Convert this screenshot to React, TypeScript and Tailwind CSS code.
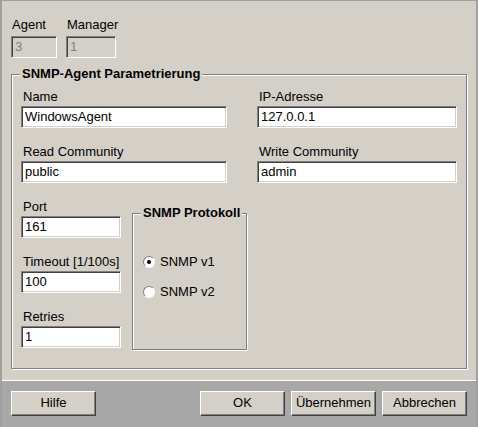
const font = { fontFamily: '"Liberation Sans", Arial, sans-serif' }

function Field({ value, disabled, w }: { value: string; disabled?: boolean; w: string }) {
  return (
    <div
      className={`${w} h-[22px] flex items-center pl-[3px] text-[13px] border border-t-[#808080] border-l-[#808080] border-b-white border-r-white shadow-[inset_1px_1px_0_#404040,inset_-1px_-1px_0_#d4d0c8] ${disabled ? 'bg-[#d4d0c8] text-[#808080]' : 'bg-white text-black'}`}
    >
      {value}
    </div>
  )
}

function Labeled({ label, value, w }: { label: string; value: string; w: string }) {
  return (
    <div className="flex flex-col">
      <div className="h-[19px] pl-[2px] text-[13px] leading-[15px] pt-[2px]">{label}</div>
      <Field value={value} w={w} />
    </div>
  )
}

function Button({ children, w = 'w-[85px]' }: { children: string; w?: string }) {
  return (
    <button className={`${w} h-[25px] bg-[#d4d0c8] text-[13px] text-black border border-t-white border-l-white border-b-[#404040] border-r-[#404040] shadow-[inset_-1px_-1px_0_#808080]`}>
      {children}
    </button>
  )
}

function Radio({ checked, label }: { checked?: boolean; label: string }) {
  return (
    <div className="flex items-center gap-[5px] h-[16px]">
      <div className="w-[12px] h-[12px] rounded-full bg-white border border-t-[#808080] border-l-[#808080] border-b-white border-r-white flex items-center justify-center">
        {checked && <div className="w-[4px] h-[4px] rounded-full bg-black" />}
      </div>
      <span className="text-[13px]">{label}</span>
    </div>
  )
}

function Group({ title, className, children }: { title: string; className: string; children: React.ReactNode }) {
  return (
    <div className={`relative border border-[#808080] shadow-[inset_1px_1px_0_white,1px_1px_0_white] ${className}`}>
      <div className="absolute -top-[9px] left-[8px] px-[2px] bg-[#d4d0c8] text-[13px] font-bold leading-[16px]">{title}</div>
      {children}
    </div>
  )
}

export default function App() {
  return (
    <div style={font} className="w-[478px] h-[427px] flex flex-col bg-[#a8a8a8] text-black overflow-hidden border-l-2 border-t border-r-2 border-[#a0a0a0]">
      <div className="flex-1 bg-[#d4d0c8] flex flex-col pl-[9px] pt-[12px] border-b border-white">
        {/* Agent / Manager */}
        <div className="flex gap-[9px]">
          <div className="flex flex-col">
            <div className="h-[23px] pl-[1px] text-[13px] pt-[2px]">Agent</div>
            <Field value="3" disabled w="w-[46px]" />
          </div>
          <div className="flex flex-col">
            <div className="h-[23px] pl-[1px] text-[13px] pt-[2px]">Manager</div>
            <Field value="1" disabled w="w-[50px]" />
          </div>
        </div>

        {/* SNMP-Agent Parametrierung */}
        <Group title="SNMP-Agent Parametrierung" className="mt-[16px] w-[456px] h-[295px] pl-[9px] pr-[9px] pt-[12px]">
          <div className="flex justify-between">
            <Labeled label="Name" value="WindowsAgent" w="w-[206px]" />
            <Labeled label="IP-Adresse" value="127.0.0.1" w="w-[200px]" />
          </div>
          <div className="flex justify-between mt-[14px]">
            <Labeled label="Read Community" value="public" w="w-[206px]" />
            <Labeled label="Write Community" value="admin" w="w-[200px]" />
          </div>
          <div className="flex items-start mt-[14px]">
            <div className="flex flex-col gap-[14px]">
              <Labeled label="Port" value="161" w="w-[100px]" />
              <Labeled label="Timeout [1/100s]" value="100" w="w-[100px]" />
              <Labeled label="Retries" value="1" w="w-[100px]" />
            </div>
            <Group title="SNMP Protokoll" className="ml-[11px] mt-[16px] w-[115px] h-[137px] pl-[10px] pt-[40px]">
              <div className="flex flex-col gap-[14px]">
                <Radio checked label="SNMP v1" />
                <Radio label="SNMP v2" />
              </div>
            </Group>
          </div>
        </Group>
      </div>

      {/* Buttons */}
      <div className="h-[46px] flex items-center px-[9px] pb-[2px]">
        <Button>Hilfe</Button>
        <div className="flex-1" />
        <div className="flex gap-[6px]">
          <Button>OK</Button>
          <Button>Übernehmen</Button>
          <Button>Abbrechen</Button>
        </div>
      </div>
    </div>
  )
}
